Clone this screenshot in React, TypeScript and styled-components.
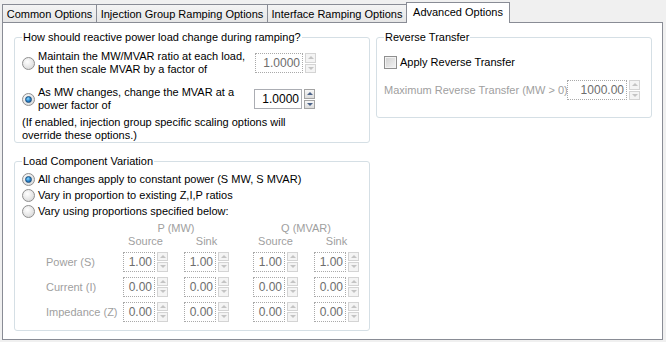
import React from 'react';
import styled, { createGlobalStyle, css } from 'styled-components';

const GlobalStyle = createGlobalStyle`
  html, body {
    margin: 0;
    padding: 0;
    background: #f0f0f0;
  }
  body {
    font-family: "Liberation Sans", Arial, sans-serif;
    font-size: 11px;
    color: #000;
  }
`;

const Window = styled.div`
  width: 666px;
  height: 342px;
  box-sizing: border-box;
  padding: 0 4px 0 2px;
  background: #f0f0f0;
`;

const TabStrip = styled.div`
  display: flex;
  align-items: flex-end;
  height: 22px;
`;

const Tab = styled.div<{ $active?: boolean; $w: number }>`
  box-sizing: border-box;
  width: ${p => p.$w}px;
  height: 18px;
  margin-left: -1px;
  display: flex;
  align-items: center;
  justify-content: center;
  border: 1px solid #898c95;
  border-bottom: none;
  background: linear-gradient(#f4f4f4, #e6e6e6);
  white-space: nowrap;
  &:first-child {
    margin-left: 0;
  }
  ${p =>
    p.$active &&
    css`
      height: 21px;
      margin-bottom: -1px;
      padding-bottom: 2px;
      background: #fff;
      position: relative;
      z-index: 1;
    `}
`;

const Panel = styled.div`
  box-sizing: border-box;
  width: 661px;
  height: 318px;
  border: 1px solid #898c95;
  background: #fff;
  display: flex;
  gap: 6px;
  padding: 7px 0 0 11px;
`;

const Column = styled.div<{ $w: number }>`
  width: ${p => p.$w}px;
  display: flex;
  flex-direction: column;
  gap: 11px;
`;

const Group = styled.fieldset<{ $pb?: number; $pt?: number }>`
  margin: 0;
  min-width: 0;
  border: 1px solid #d5dfe5;
  border-radius: 3px;
  padding: ${p => p.$pt ?? 6}px 7px ${p => p.$pb ?? 0}px 7px;
  box-sizing: border-box;
`;

const Legend = styled.legend`
  padding: 0 1px;
  line-height: 14px;
`;

const OptionRow = styled.div<{ $mt?: number }>`
  display: flex;
  align-items: center;
  margin-top: ${p => p.$mt ?? 0}px;
`;

const Radio = styled.span<{ $checked?: boolean }>`
  box-sizing: border-box;
  width: 13px;
  height: 13px;
  flex-shrink: 0;
  border-radius: 50%;
  border: 1px solid #8f8f8f;
  background: radial-gradient(circle at 40% 35%, #ffffff 0%, #e6e6e6 55%, #cfcfcf 100%);
  position: relative;
  margin-right: 3px;
  ${p =>
    p.$checked &&
    css`
      &::after {
        content: '';
        position: absolute;
        left: 2px;
        top: 2px;
        width: 7px;
        height: 7px;
        box-sizing: border-box;
        border-radius: 50%;
        border: 1px solid #1c4f7c;
        background: radial-gradient(circle at 40% 35%, #8fdcff 0%, #2a86cf 50%, #0f4e8c 100%);
      }
    `}
`;

const Check = styled.span`
  box-sizing: border-box;
  width: 13px;
  height: 13px;
  flex-shrink: 0;
  border: 1px solid #8f8f8f;
  background: linear-gradient(135deg, #cfcfcf, #f4f4f4);
  box-shadow: inset 0 0 0 1px #f2f2f2;
  margin-right: 3px;
`;

const OptionText = styled.div<{ $w?: number; $disabled?: boolean; $lh?: number }>`
  line-height: ${p => p.$lh ?? 13}px;
  width: ${p => (p.$w ? `${p.$w}px` : 'auto')};
  color: ${p => (p.$disabled ? '#a0a0a0' : '#000')};
  white-space: nowrap;
`;

const Note = styled.div`
  line-height: 13px;
  margin-top: 4px;
`;

const NumBox = styled.div<{ $w: number; $disabled?: boolean }>`
  box-sizing: border-box;
  width: ${p => p.$w}px;
  height: 20px;
  line-height: 18px;
  text-align: right;
  padding-right: 2px;
  background: #fff;
  border: 1px ${p => (p.$disabled ? 'dotted #a9a9a9' : 'solid #abadb3')};
  color: ${p => (p.$disabled ? '#6d6d6d' : '#000')};
  font-size: 12px;
`;

const Spin = styled.div`
  display: flex;
  flex-direction: column;
  gap: 1px;
  width: 11px;
  height: 20px;
  margin-left: 2px;
`;

const SpinBtn = styled.div<{ $down?: boolean; $disabled?: boolean }>`
  flex: 1;
  box-sizing: border-box;
  border: 1px solid ${p => (p.$disabled ? '#d4d4d4' : '#a3a3a3')};
  background: ${p => (p.$disabled ? '#f4f4f4' : 'linear-gradient(#f7f7f7, #dcdcdc)')};
  display: flex;
  align-items: center;
  justify-content: center;
  &::before {
    content: '';
    width: 0;
    height: 0;
    border-left: 3px solid transparent;
    border-right: 3px solid transparent;
    ${p =>
      p.$down
        ? css`border-top: 3px solid ${p.$disabled ? '#c4c4c4' : '#4b6288'};`
        : css`border-bottom: 3px solid ${p.$disabled ? '#c4c4c4' : '#4b6288'};`}
  }
`;

const Field = styled.div`
  display: flex;
  align-items: center;
`;

// shared column layout for the proportions table
const tableCols = css`
  display: grid;
  grid-template-columns: 77px 45px 16px 45px 24px 45px 16px 45px;
  margin-left: 24px;
  color: #a0a0a0;
`;

const TableHead = styled.div`
  ${tableCols};
  grid-auto-rows: 13px;
  margin-top: 3px;
  margin-bottom: 1px;
`;

const Head = styled.div<{ $col: string }>`
  grid-column: ${p => p.$col};
  text-align: center;
  line-height: 13px;
`;

const DataRow = styled.div`
  ${tableCols};
  height: 25px;
  align-items: center;
`;

const RowLabel = styled.div`
  grid-column: 1;
`;

const Cell = styled.div<{ $col: number }>`
  grid-column: ${p => p.$col};
`;

function SpinBox({ value, w, disabled }: { value: string; w: number; disabled?: boolean }) {
  return (
    <Field>
      <NumBox $w={w} $disabled={disabled}>{value}</NumBox>
      <Spin>
        <SpinBtn $disabled={disabled} />
        <SpinBtn $down $disabled={disabled} />
      </Spin>
    </Field>
  );
}

const rows = [
  { label: 'Power (S)', v: '1.00' },
  { label: 'Current (I)', v: '0.00' },
  { label: 'Impedance (Z)', v: '0.00' },
];

export default function App() {
  return (
    <Window>
      <GlobalStyle />
      <TabStrip>
        <Tab $w={95}>Common Options</Tab>
        <Tab $w={172}>Injection Group Ramping Options</Tab>
        <Tab $w={140}>Interface Ramping Options</Tab>
        <Tab $w={104} $active>Advanced Options</Tab>
      </TabStrip>
      <Panel>
        <Column $w={356}>
          <Group $pt={6} $pb={0}>
            <Legend>How should reactive power load change during ramping?</Legend>
            <OptionRow>
              <Radio />
              <OptionText $w={217}>
                Maintain the MW/MVAR ratio at each load,
                <br />
                but then scale MVAR by a factor of
              </OptionText>
              <SpinBox value="1.0000" w={48} disabled />
            </OptionRow>
            <OptionRow $mt={10}>
              <Radio $checked />
              <OptionText $w={216}>
                As MW changes, change the MVAR at a
                <br />
                power factor of
              </OptionText>
              <SpinBox value="1.0000" w={48} />
            </OptionRow>
            <Note>
              (If enabled, injection group specific scaling options will
              <br />
              override these options.)
            </Note>
          </Group>
          <Group $pt={3} $pb={6}>
            <Legend>Load Component Variation</Legend>
            <OptionRow>
              <Radio $checked />
              <OptionText $lh={16}>All changes apply to constant power (S MW, S MVAR)</OptionText>
            </OptionRow>
            <OptionRow>
              <Radio />
              <OptionText $lh={16}>Vary in proportion to existing Z,I,P ratios</OptionText>
            </OptionRow>
            <OptionRow>
              <Radio />
              <OptionText $lh={16}>Vary using proportions specified below:</OptionText>
            </OptionRow>
            <TableHead>
              <Head $col="2 / 5">P (MW)</Head>
              <Head $col="6 / 9">Q (MVAR)</Head>
              <Head $col="2">Source</Head>
              <Head $col="4">Sink</Head>
              <Head $col="6">Source</Head>
              <Head $col="8">Sink</Head>
            </TableHead>
            {rows.map(r => (
              <DataRow key={r.label}>
                <RowLabel>{r.label}</RowLabel>
                {[2, 4, 6, 8].map(c => (
                  <Cell key={c} $col={c}>
                    <SpinBox value={r.v} w={32} disabled />
                  </Cell>
                ))}
              </DataRow>
            ))}
          </Group>
        </Column>
        <Column $w={276}>
          <Group $pt={10} $pb={17}>
            <Legend>Reverse Transfer</Legend>
            <OptionRow>
              <Check />
              <OptionText $lh={16}>Apply Reverse Transfer</OptionText>
            </OptionRow>
            <OptionRow $mt={10}>
              <OptionText $w={183} $disabled>Maximum Reverse Transfer (MW &gt; 0)</OptionText>
              <SpinBox value="1000.00" w={60} disabled />
            </OptionRow>
          </Group>
        </Column>
      </Panel>
    </Window>
  );
}
